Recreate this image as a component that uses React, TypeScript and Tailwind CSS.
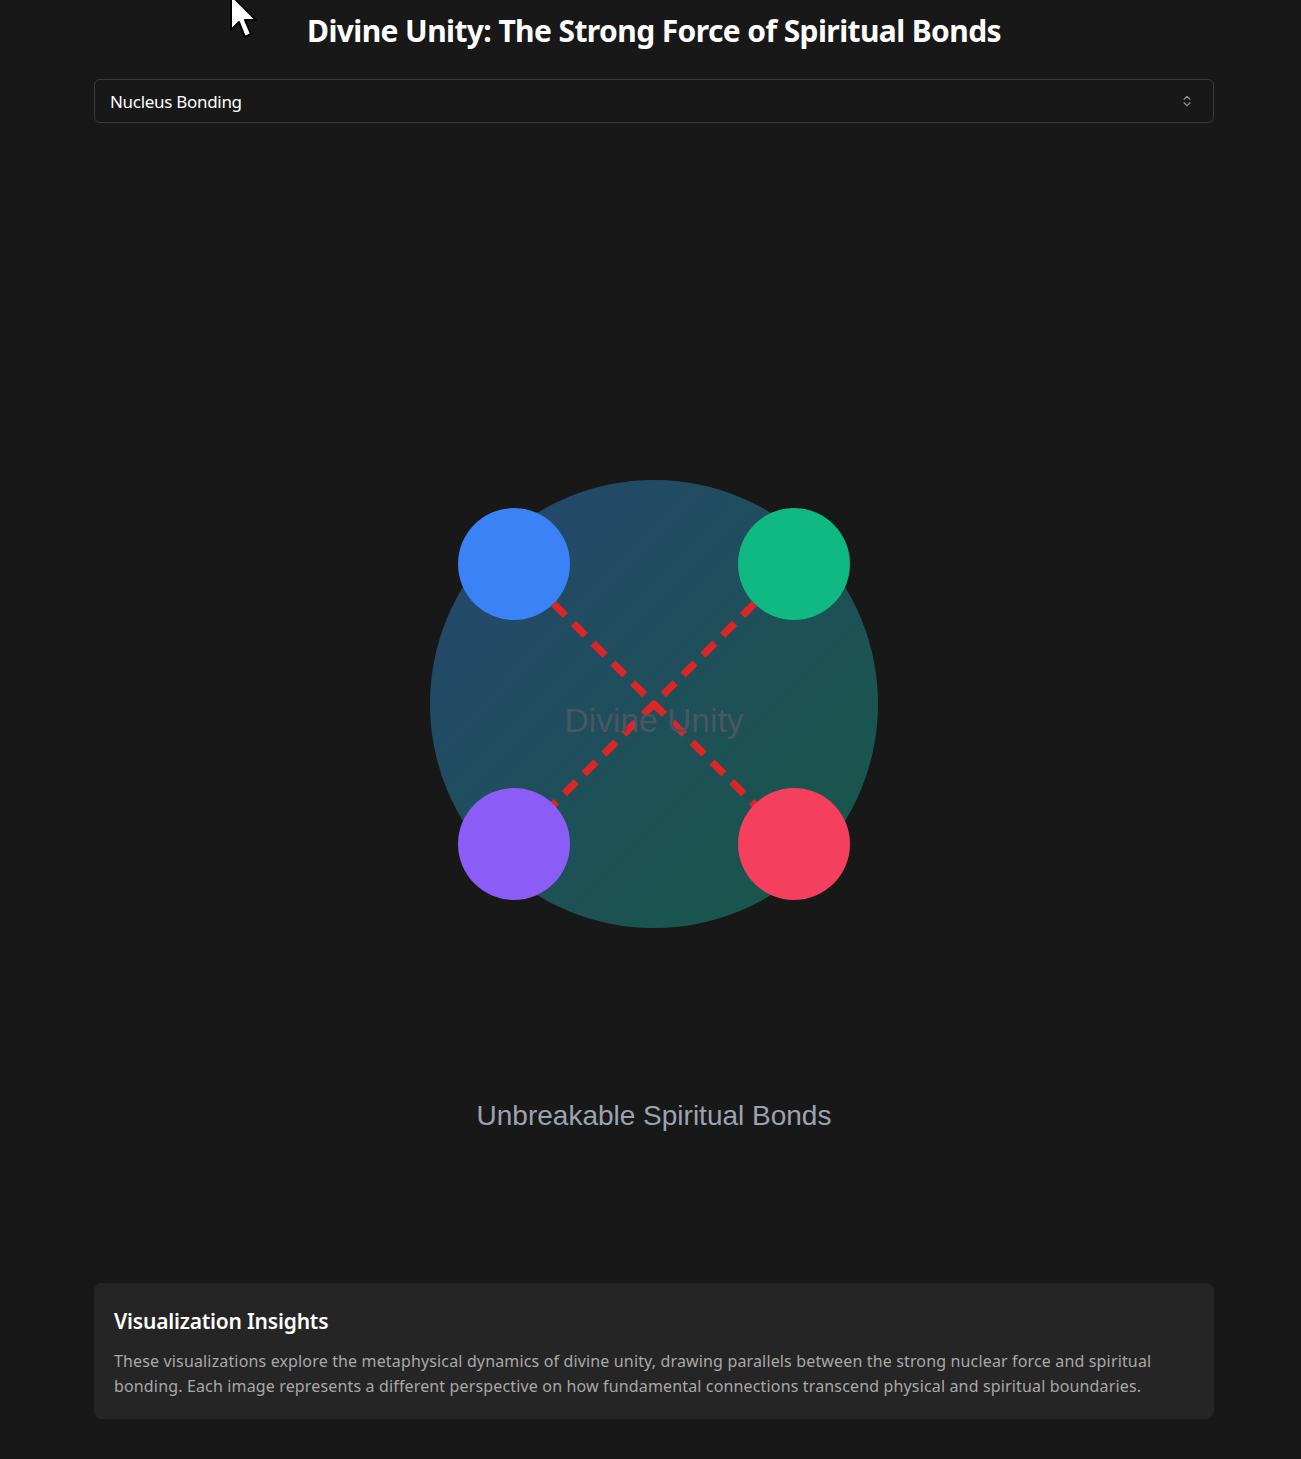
import React, { useState } from 'react';
import { ChevronsUpDown } from 'lucide-react';

const views = ['Nucleus Bonding', 'Quantum Entanglement', 'Field Harmony'];

const nodes = [
  { cx: 375, cy: 375, fill: '#3b82f6' },
  { cx: 625, cy: 375, fill: '#10b981' },
  { cx: 375, cy: 625, fill: '#8b5cf6' },
  { cx: 625, cy: 625, fill: '#f43f5e' },
];

const NucleusView = () => (
  <svg viewBox="0 0 1000 1000" className="block w-full h-[1120px]">
    <defs>
      <linearGradient id="unityGrad" x1="0" y1="0" x2="1" y2="1">
        <stop offset="0%" stopColor="#25466f" />
        <stop offset="100%" stopColor="#175845" />
      </linearGradient>
    </defs>
    <circle cx="500" cy="500" r="200" fill="url(#unityGrad)" />
    <line x1="375" y1="375" x2="625" y2="625" stroke="#dc2626" strokeWidth="6.5" strokeDasharray="15 10" />
    <line x1="625" y1="375" x2="375" y2="625" stroke="#dc2626" strokeWidth="6.5" strokeDasharray="15 10" />
    {nodes.map((n) => (
      <circle key={n.fill} cx={n.cx} cy={n.cy} r="50" fill={n.fill} />
    ))}
    <text
      x="500"
      y="525"
      textAnchor="middle"
      fontSize="30"
      fill="#4b5563"
      fontFamily="'Liberation Sans', Arial, sans-serif"
    >
      Divine Unity
    </text>
    <text
      x="500"
      y="876"
      textAnchor="middle"
      fontSize="25"
      fill="#9ca3af"
      fontFamily="'Liberation Sans', Arial, sans-serif"
    >
      Unbreakable Spiritual Bonds
    </text>
  </svg>
);

const App = () => {
  const [view, setView] = useState(views[0]);

  return (
    <div className="relative min-h-[1459px] bg-[#181818] text-white pl-[94px] pr-[87px] font-['Noto_Sans',sans-serif]">
      {/* mouse pointer left in the capture */}
      <svg className="absolute left-[229px] top-[-6px] w-[32px] h-[46px]" viewBox="0 0 32 46">
        <path d="M2 1 L2 36 L10 28 L16 43 L22 40 L16 26 L27 26 Z" fill="#fff" stroke="#000" strokeWidth="2" strokeLinejoin="round" />
      </svg>

      <h1 className="pt-[12px] text-center text-[30px] font-bold leading-[38px] tracking-[-0.6px]">
        Divine Unity: The Strong Force of Spiritual Bonds
      </h1>

      <div className="relative mt-[29px]">
        <select
          value={view}
          onChange={(e) => setView(e.target.value)}
          className="w-full h-[44px] appearance-none rounded-md border border-[#3a3a3a] bg-[#181818] pl-[15px] pr-10 pt-[2px] text-[17px] text-white tracking-[-0.3px] outline-none"
        >
          {views.map((v) => (
            <option key={v} value={v}>
              {v}
            </option>
          ))}
        </select>
        <ChevronsUpDown className="pointer-events-none absolute right-[20px] top-1/2 -translate-y-1/2 h-[14px] w-[14px] text-[#9a9a9a]" />
      </div>

      <div className="mt-[21px]">
        <NucleusView />
      </div>

      <div className="mt-[19px] rounded-lg bg-[#252525] px-5 pt-[23px] pb-[20px]">
        <h2 className="text-[21px] font-semibold leading-[30px] tracking-[-0.2px]">Visualization Insights</h2>
        <p className="mt-[13px] text-[16px] leading-[25px] text-[#a8a8a8] tracking-[0.15px]">
          These visualizations explore the metaphysical dynamics of divine unity, drawing parallels between the strong
          nuclear force and spiritual bonding. Each image represents a different perspective on how fundamental
          connections transcend physical and spiritual boundaries.
        </p>
      </div>
    </div>
  );
};

export default App;
